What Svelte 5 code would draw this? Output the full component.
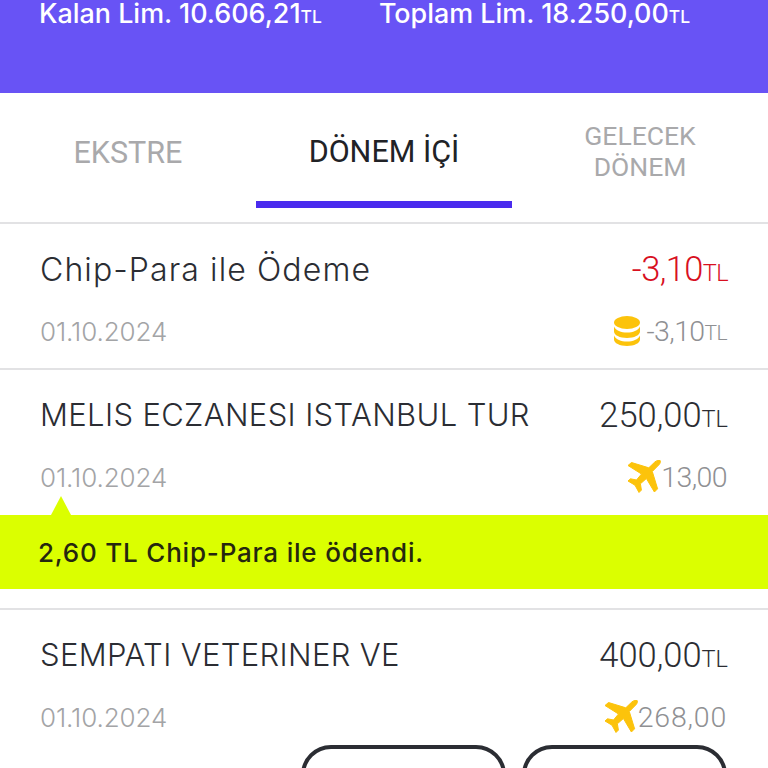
<script>
  const tabs = [
    { label: 'EKSTRE' },
    { label: 'DÖNEM İÇİ', active: true },
    { label: 'GELECEK DÖNEM', small: true }
  ]
</script>

{#snippet coins()}
  <svg class="coins" viewBox="0 0 26 30" aria-hidden="true">
    <ellipse cx="13" cy="6.5" rx="13" ry="6.5" fill="#fcc30b" />
    <path d="M0 10.5c2 4 7 6 13 6s11-2 13-6v5c0 3.6-5.8 6.5-13 6.5S0 19.100 0 15.500z" fill="#fcc30b" />
    <path d="M0 19.500c2 4 7 6 13 6s11-2 13-6v4c0 3.600-5.800 6.500-13 6.500S0 27.100 0 23.500z" fill="#fcc30b" />
  </svg>
{/snippet}

{#snippet plane()}
  <svg class="plane" viewBox="0 0 34 34" aria-hidden="true">
    <path d="M33.500 1.200c-1.300-1.300-3.700-1-5.700.8l-6 5.800L4.500 2.500 1 5.500 14.500 14 9.500 20 3.500 18.800 1 21l7 4.200 4 7.300 2.400-2.400-1-6.300 6-5.300 8 13.500 3.200-3.200-5.300-17.300 6.400-6.500c1.800-1.900 2.200-3.400.8-4.800z" fill="#fcc30b" stroke="#fcc30b" stroke-width="1" stroke-linejoin="round" />
  </svg>
{/snippet}

<div class="screen">
  <header class="limits">
    <span>Kalan Lim. 10.606,21<small>TL</small></span>
    <span>Toplam Lim. 18.250,00<small>TL</small></span>
  </header>

  <nav class="tabs">
    {#each tabs as tab}
      <div class="tab" class:active={tab.active} class:small={tab.small}>{tab.label}</div>
    {/each}
  </nav>

  <section class="row first">
    <div class="line">
      <span class="name wide">Chip-Para ile Ödeme</span>
      <span class="amount red">-3,10<small>TL</small></span>
    </div>
    <div class="line sub">
      <span class="date">01.10.2024</span>
      <span class="points tight">{@render coins()}-3,10<small>TL</small></span>
    </div>
  </section>

  <section class="row second">
    <div class="line">
      <span class="name">MELIS ECZANESI ISTANBUL TUR</span>
      <span class="amount">250,00<small>TL</small></span>
    </div>
    <div class="line sub">
      <span class="date">01.10.2024</span>
      <span class="points tight">{@render plane()}13,00</span>
    </div>
  </section>

  <div class="note">2,60 TL Chip-Para ile ödendi.</div>

  <section class="row third">
    <div class="line">
      <span class="name">SEMPATI VETERINER VE</span>
      <span class="amount">400,00<small>TL</small></span>
    </div>
    <div class="line sub">
      <span class="date">01.10.2024</span>
      <span class="points loose">{@render plane()}268,00</span>
    </div>
    <div class="actions">
      <div class="pill"></div>
      <div class="pill"></div>
    </div>
  </section>
</div>

<style>
  :global(body) {
    background: #fff;
  }

  .screen {
    height: 768px;
    overflow: hidden;
    font-family: Inter, "Liberation Sans", sans-serif;
    color: #2b2d33;
    background: #fff;
  }

  .limits {
    height: 93px;
    box-sizing: border-box;
    padding: 0 0 0 39px;
    display: flex;
    gap: 57px;
    align-items: flex-start;
    background: #6853f5;
    color: #fff;
    font-size: 26.900px;
    line-height: 27px;
    font-weight: 500;
  }

  .limits small {
    font-size: 17.500px;
  }

  .tabs {
    height: 129px;
    display: grid;
    grid-template-columns: repeat(3, 256px);
    border-bottom: 2px solid #e2e2e4;
  }

  .tab {
    height: 115px;
    padding: 4px 50px 0;
    box-sizing: border-box;
    display: flex;
    align-items: center;
    justify-content: center;
    text-align: center;
    font-family: Roboto, sans-serif;
    font-size: 30.500px;
    line-height: 31px;
    color: #a9a9ab;
  }

  .tab.small {
    font-size: 26.500px;
    padding-top: 1px;
  }

  .tab.active {
    color: #212226;
    border-bottom: 7px solid #4a2bee;
    padding: 9px 0 0;
  }

  .row {
    padding: 26px 40px 0;
    border-bottom: 2px solid #e2e2e4;
    box-sizing: border-box;
  }

  .first {
    height: 146px;
  }

  .second {
    height: 145px;
    border-bottom: 0;
  }

  .third {
    height: 160px;
    border-top: 2px solid #e2e2e4;
    border-bottom: 0;
    margin-top: 19px;
  }

  .line {
    display: flex;
    justify-content: space-between;
    align-items: center;
    height: 38px;
  }

  .sub {
    margin-top: 26px;
    height: 34px;
  }

  .name {
    font-size: 31px;
    font-weight: 300;
    line-height: 38px;
    letter-spacing: .35px;
  }

  .name.wide {
    padding-top: 2px;
    font-size: 32px;
    letter-spacing: 1.1px;
  }

  .amount {
    padding-top: 4px;
    font-family: Roboto, sans-serif;
    font-size: 34.500px;
    font-weight: 300;
    line-height: 38px;
  }

  .amount small {
    font-size: 23.500px;
  }

  .red {
    color: #d8101f;
    letter-spacing: -.6px;
  }

  .date {
    font-size: 26px;
    font-weight: 300;
    color: #a3a4a6;
    letter-spacing: -.1px;
  }

  .points {
    display: flex;
    align-items: center;
    margin-right: 1px;
    font-family: Roboto, sans-serif;
    font-size: 28.500px;
    font-weight: 300;
    color: #8f9093;
  }

  .points.tight {
    letter-spacing: -.6px;
  }

  .points.loose {
    letter-spacing: .8px;
  }

  .points small {
    font-size: 21px;
    align-self: flex-end;
    line-height: 30px;
  }

  .coins {
    width: 26px;
    height: 30px;
    margin-right: 7px;
  }

  .plane {
    width: 34px;
    height: 34px;
  }

  .note {
    position: relative;
    height: 74px;
    padding-left: 38px;
    display: flex;
    align-items: center;
    background: #dbff00;
    color: #25270f;
    font-size: 26px;
    font-weight: 500;
    letter-spacing: .8px;
  }

  /* little arrow that points at the date above */
  .note::before {
    content: "";
    position: absolute;
    left: 51px;
    top: -19px;
    border-left: 10px solid transparent;
    border-right: 10px solid transparent;
    border-bottom: 19px solid #dbff00;
  }

  .actions {
    display: flex;
    justify-content: flex-end;
    gap: 16px;
    margin-top: 11px;
    margin-right: 1px;
  }

  .pill {
    width: 205px;
    height: 60px;
    box-sizing: border-box;
    border: 4px solid #2b2d33;
    border-radius: 30px;
  }
</style>
